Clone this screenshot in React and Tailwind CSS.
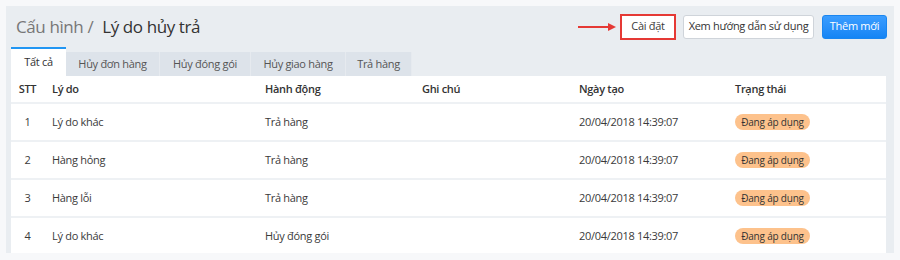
import React from 'react';

const tabs = [
    { label: 'Tất cả', w: 'w-[55px]', active: true },
    { label: 'Hủy đơn hàng', w: 'w-[94px]' },
    { label: 'Hủy đóng gói', w: 'w-[91px]' },
    { label: 'Hủy giao hàng', w: 'w-[95px]' },
    { label: 'Trả hàng', w: 'w-[66px]' },
];

const rows = [
    { stt: 1, reason: 'Lý do khác', action: 'Trả hàng' },
    { stt: 2, reason: 'Hàng hỏng', action: 'Trả hàng' },
    { stt: 3, reason: 'Hàng lỗi', action: 'Trả hàng' },
    { stt: 4, reason: 'Lý do khác', action: 'Hủy đóng gói' },
];

const cols = 'grid grid-cols-[41px_213px_157px_157px_156px_1fr] items-center';

function ArrowRight() {
    return (
        <svg width="40" height="10" viewBox="0 0 40 10" className="mr-[2px]">
            <line x1="0" y1="5" x2="32" y2="5" stroke="#e53935" strokeWidth="2" />
            <polygon points="30,1 38,5 30,9" fill="#e53935" />
        </svg>
    );
}

export default function App() {
    return (
        <div className="w-[900px] h-[260px] bg-[#f7f8fa] pt-[6px] pl-[6px] overflow-hidden font-['Open_Sans',sans-serif] text-[11px] tracking-[-0.3px] text-[#3a3a3a]">
            <div className="w-[888px] h-[247px] bg-[#e9edf1] pl-[5px] pr-[8px] flex flex-col">
                {/* header */}
                <div className="h-[41px] flex items-center justify-between shrink-0">
                    <div className="ml-[5px] text-[17px] tracking-[-0.4px] leading-none">
                        <span className="text-[#777]">Cấu hình /</span>
                        <span className="text-[#333] ml-[9px]">Lý do hủy trả</span>
                    </div>
                    <div className="flex items-center mr-[-1px]">
                        <ArrowRight />
                        <div className="border-2 border-[#e53935] h-[26px] w-[56px] flex items-center justify-center bg-white">
                            Cài đặt
                        </div>
                        <button className="ml-[7px] h-[24px] w-[131px] bg-white border border-[#cfd4da] rounded-[3px] text-[#333]">
                            Xem hướng dẫn sử dụng
                        </button>
                        <button className="ml-[8px] h-[24px] w-[65px] rounded-[3px] text-white bg-gradient-to-b from-[#3a9dff] to-[#1485f5] border border-[#1a86f0]">
                            Thêm mới
                        </button>
                    </div>
                </div>

                {/* tabs */}
                <div className="h-[29px] flex items-end shrink-0">
                    {tabs.map((t) =>
                        t.active ? (
                            <div key={t.label} className={`${t.w} h-[29px] bg-white border-t-2 border-[#2196f3] flex items-center justify-center text-[#333]`}>
                                {t.label}
                            </div>
                        ) : (
                            <div key={t.label} className={`${t.w} h-[24px] bg-[#dde3ea] border-r border-[#e6eaef] flex items-center justify-center text-[#555]`}>
                                {t.label}
                            </div>
                        )
                    )}
                </div>

                {/* table */}
                <div className="flex-1 bg-white overflow-hidden">
                    <div className={`${cols} h-[28px] border-b-2 border-[#eef1f4] font-semibold text-[#333]`}>
                        <div className="w-[33px] text-center">STT</div>
                        <div>Lý do</div>
                        <div>Hành động</div>
                        <div>Ghi chú</div>
                        <div>Ngày tạo</div>
                        <div>Trạng thái</div>
                    </div>
                    {rows.map((r) => (
                        <div key={r.stt} className={`${cols} h-[38px] border-b-2 border-[#eef1f4]`}>
                            <div className="w-[33px] text-center">{r.stt}</div>
                            <div>{r.reason}</div>
                            <div>{r.action}</div>
                            <div></div>
                            <div>20/04/2018 14:39:07</div>
                            <div>
                                <span className="inline-flex items-center justify-center w-[75px] h-[16px] rounded-full bg-[#fdc28c] text-[10px] tracking-[-0.2px] text-[#333]">
                                    Đang áp dụng
                                </span>
                            </div>
                        </div>
                    ))}
                </div>
            </div>
        </div>
    );
}
